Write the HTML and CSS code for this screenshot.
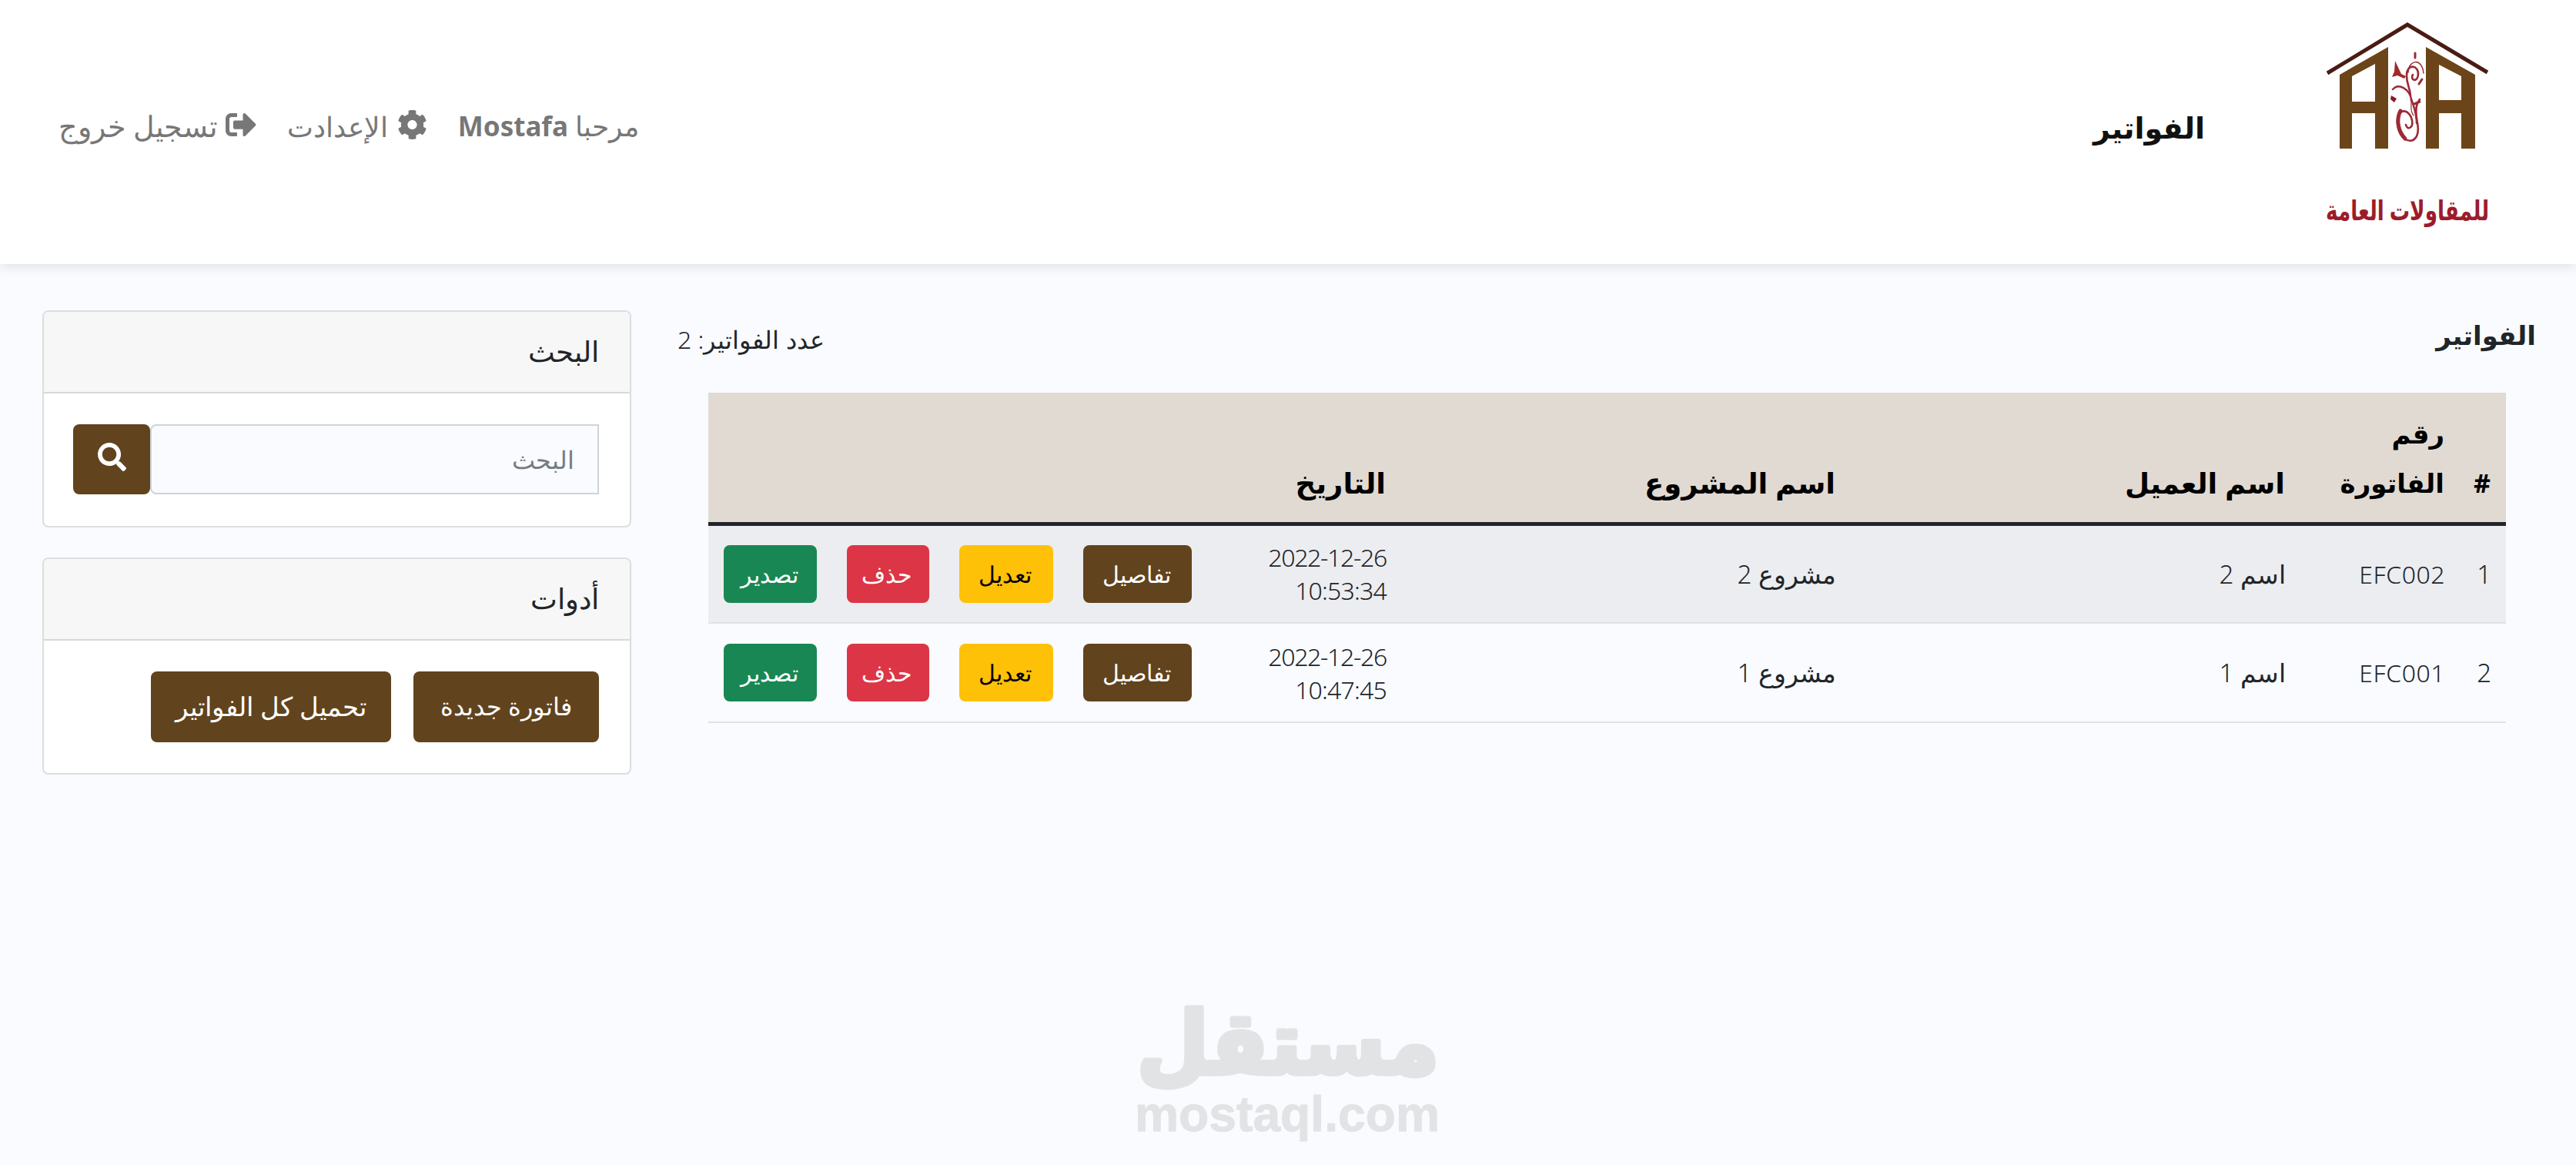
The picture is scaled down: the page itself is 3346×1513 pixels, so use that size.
FILE: index.html
```
<!DOCTYPE html>
<html lang="ar" dir="rtl">
<head>
    <meta charset="UTF-8">
    <meta name="viewport" content="width=device-width, initial-scale=1.0">
    <title>الفواتير</title>
    <link rel="stylesheet" href="styles.css">
</head>
<body>
    <header class="navbar">
        <svg class="logo" viewBox="0 0 220 290" direction="rtl">
            <path d="M5 75 L109 12 L213 74" fill="none" stroke="#4a1c14" stroke-width="5"/>
            <!-- house walls -->
            <path fill="#6b4519" fill-rule="evenodd" d="M21 77 L84 41 V173 H67 V127 H37 V173 H21Z M37 79 V112 H67 V63Z"/>
            <path fill="#6b4519" fill-rule="evenodd" d="M133 41 L197 77 V173 H179 V127 H150 V173 H133Z M150 64 V110 H179 V79Z"/>
            <!-- ornament -->
            <g fill="none" stroke="#9c2a35" stroke-linecap="round">
                <path d="M107 142 C109 150 117 146 115 136 C112 122 97 119 96 136 C95 158 113 171 121 157 C127 144 116 130 122 114 L125 109" stroke-width="2.6"/>
                <path d="M100 124 C94 135 97 151 106 160" stroke-width="5"/>
                <path d="M90 96 C98 87 111 96 114 108 C117 118 121 127 121 140" stroke-width="2.4"/>
                <path d="M113 104 C112 92 108 90 108 78 C108 62 124 64 123 77 C122 88 112 84 116 77" stroke-width="2.6"/>
                <path d="M110 74 C110 58 128 54 130 75" stroke-width="1.5"/>
                <path d="M113 108 C116 118 111 122 117 130" stroke-width="1.2"/>
                <path d="M128 83 L124 89 M119 49 V55 M118 115 L125 112" stroke-width="3"/>
            </g>
            <path fill="#a02a2a" d="M93 59 L101 76 L107 79 L105 82 L96 78 L89 80 L92 73Z"/>
            <path fill="#8a1a28" d="M88 104 L95 108 L92 113 L87 109Z"/>
            <text class="logo-text" x="215" y="266" textLength="212" lengthAdjust="spacingAndGlyphs">للمقاولات العامة</text>
        </svg>
        <h1 class="page-title">الفواتير</h1>
        <nav class="nav-links">
            <a><span>مرحبا <b>Mostafa</b></span></a>
            <a class="settings">
                <svg class="icon" width="39" height="40" viewBox="0 0 512 512"><path fill="currentColor" d="M487.4 315.7l-42.6-24.6c4.3-23.2 4.3-47 0-70.2l42.6-24.6c4.9-2.8 7.1-8.6 5.5-14-11.1-35.6-30-67.8-54.7-94.6-3.8-4.1-10-5.1-14.8-2.3L380.8 110c-17.9-15.4-38.5-27.3-60.8-35.1V25.8c0-5.6-3.9-10.5-9.4-11.7-36.7-8.2-74.3-7.8-109.2 0-5.5 1.2-9.4 6.1-9.4 11.7V75c-22.2 7.9-42.8 19.8-60.8 35.1L88.7 85.5c-4.900-2.800-11-1.900-14.800 2.300-24.700 26.700-43.600 58.900-54.700 94.600-1.700 5.400.6 11.200 5.500 14L67.300 221c-4.300 23.200-4.300 47 0 70.200l-42.600 24.600c-4.900 2.800-7.100 8.600-5.500 14 11.100 35.600 30 67.800 54.700 94.600 3.800 4.100 10 5.100 14.800 2.300l42.600-24.600c17.900 15.400 38.500 27.300 60.800 35.100v49.200c0 5.600 3.900 10.500 9.400 11.700 36.700 8.200 74.300 7.800 109.200 0 5.500-1.200 9.400-6.100 9.400-11.700v-49.200c22.200-7.900 42.800-19.800 60.800-35.100l42.600 24.600c4.900 2.800 11 1.900 14.800-2.300 24.700-26.700 43.600-58.900 54.700-94.600 1.500-5.500-.7-11.300-5.600-14.100zM256 336c-44.100 0-80-35.900-80-80s35.900-80 80-80 80 35.900 80 80-35.900 80-80 80z"/></svg>
                <span>الإعدادت</span>
            </a>
            <a class="logout">
                <svg class="icon" width="40" height="40" viewBox="0 0 512 512"><path fill="currentColor" d="M497 273L329 441c-15 15-41 4.500-41-17v-96H152c-13.300 0-24-10.700-24-24v-96c0-13.300 10.700-24 24-24h136V88c0-21.400 25.900-32 41-17l168 168c9.300 9.400 9.300 24.600 0 34zM192 436v-40c0-6.600-5.400-12-12-12H96c-17.700 0-32-14.300-32-32V160c0-17.700 14.300-32 32-32h84c6.600 0 12-5.400 12-12V76c0-6.600-5.400-12-12-12H96c-53 0-96 43-96 96v192c0 53 43 96 96 96h84c6.600 0 12-5.400 12-12z"/></svg>
                <span>تسجيل خروج</span>
            </a>
        </nav>
    </header>

    <div class="content">
        <main class="invoices">
            <div class="invoices-head">
                <h2>الفواتير</h2>
                <p>عدد الفواتير: 2</p>
            </div>
            <table class="table">
                <colgroup>
                    <col class="c-num"><col class="c-code"><col class="c-name"><col class="c-name"><col class="c-date">
                    <col class="c-details"><col class="c-edit"><col class="c-delete"><col class="c-export">
                </colgroup>
                <thead>
                    <tr>
                        <th class="num">#</th>
                        <th class="code">رقم<br>الفاتورة</th>
                        <th>اسم العميل</th>
                        <th>اسم المشروع</th>
                        <th>التاريخ</th>
                        <th></th>
                        <th></th>
                        <th></th>
                        <th></th>
                    </tr>
                </thead>
                <tbody>
                    <tr>
                        <td>1</td>
                        <td class="serial">EFC002</td>
                        <td>اسم 2</td>
                        <td>مشروع 2</td>
                        <td><span class="date">2022-12-26</span><br><span class="time">10:53:34</span></td>
                        <td><button class="btn btn-sm btn-main">تفاصيل</button></td>
                        <td><button class="btn btn-sm btn-warning">تعديل</button></td>
                        <td><button class="btn btn-sm btn-danger">حذف</button></td>
                        <td><button class="btn btn-sm btn-success">تصدير</button></td>
                    </tr>
                    <tr>
                        <td>2</td>
                        <td class="serial">EFC001</td>
                        <td>اسم 1</td>
                        <td>مشروع 1</td>
                        <td><span class="date">2022-12-26</span><br><span class="time">10:47:45</span></td>
                        <td><button class="btn btn-sm btn-main">تفاصيل</button></td>
                        <td><button class="btn btn-sm btn-warning">تعديل</button></td>
                        <td><button class="btn btn-sm btn-danger">حذف</button></td>
                        <td><button class="btn btn-sm btn-success">تصدير</button></td>
                    </tr>
                </tbody>
            </table>
        </main>

        <aside class="sidebar">
            <div class="card">
                <div class="card-header">البحث</div>
                <div class="card-body">
                    <form class="search">
                        <input type="text" placeholder="البحث">
                        <button type="button" class="btn btn-main btn-search">
                            <svg width="37" height="37" viewBox="0 0 512 512"><path fill="currentColor" d="M505 442.700L405.300 343c-4.500-4.500-10.600-7-17-7H372c27.600-35.300 44-79.700 44-128C416 93.100 322.900 0 208 0S0 93.100 0 208s93.100 208 208 208c48.300 0 92.700-16.400 128-44v16.300c0 6.400 2.500 12.500 7 17l99.700 99.700c9.400 9.400 24.600 9.400 33.900 0l28.300-28.300c9.400-9.400 9.400-24.600.1-34zM208 336c-70.700 0-128-57.200-128-128 0-70.700 57.200-128 128-128 70.700 0 128 57.200 128 128 0 70.700-57.200 128-128 128z"/></svg>
                        </button>
                    </form>
                </div>
            </div>
            <div class="card">
                <div class="card-header">أدوات</div>
                <div class="card-body tools">
                    <button class="btn btn-main btn-new">فاتورة جديدة</button>
                    <button class="btn btn-main btn-all">تحميل كل الفواتير</button>
                </div>
            </div>
        </aside>
    </div>

    <svg class="watermark" viewBox="0 0 400 190" direction="rtl">
        <text class="wm-ar" x="397" y="94" textLength="392" lengthAdjust="spacingAndGlyphs">مستقل</text>
        <text class="wm-en" x="2" y="169" direction="ltr" textLength="396" lengthAdjust="spacingAndGlyphs">mostaql.com</text>
    </svg>
</body>
</html>
```
FILE: styles.css
```
* {
    box-sizing: border-box;
}
body {
    margin: 0;
    height: 1513px;
    overflow: hidden;
    position: relative;
    background-color: #f9fbfe;
    color: #212529;
    font-family: "Noto Sans", "DejaVu Sans", sans-serif;
    font-size: 32px;
    font-weight: 300;
    line-height: 43px;
}
h1, h2, p {
    margin: 0;
}
.navbar {
    display: flex;
    align-items: center;
    height: 343px;
    padding: 0 108px 0 76px;
    background: white;
    box-shadow: 0 4px 14px rgba(0, 0, 0, 0.1);
}
.logo {
    width: 220px;
    height: 290px;
    margin-top: -13px;
    overflow: visible;
}
.logo-text {
    fill: #9c1c2c;
    font-size: 36px;
    font-weight: bold;
}
.page-title {
    margin-top: -14px;
    margin-right: 154px;
    font-size: 38px;
    font-weight: bold;
    line-height: 60px;
    color: #111;
}
.nav-links {
    display: flex;
    gap: 40px;
    margin-top: -16px;
    margin-right: auto;
    font-size: 35.5px;
    line-height: 50px;
    color: #777;
}
.nav-links a {
    display: flex;
    align-items: center;
    gap: 10px;
    white-space: nowrap;
}
.nav-links b {
    font-size: 35px;
    font-weight: bold;
}
.nav-links .settings {
    gap: 12px;
}
.nav-links .logout {
    font-size: 37.5px;
}
.nav-links .icon {
    margin-top: -4px;
}
.content {
    display: flex;
    justify-content: space-between;
    padding: 60px 52px 0 55px;
}
.invoices {
    width: 2414px;
}
.invoices-head {
    display: flex;
    justify-content: space-between;
    height: 107px;
}
.invoices-head h2 {
    font-size: 34px;
    line-height: 64px;
}
.invoices-head p {
    padding-top: 16px;
}
.table {
    width: 2335px;
    margin-right: 39px;
    table-layout: fixed;
    border-collapse: collapse;
}
.c-num { width: 60px; }
.c-code { width: 207px; }
.c-name { width: 584px; }
.c-date { width: 253px; }
.c-details { width: 180px; }
.c-edit { width: 161px; }
.c-delete { width: 146px; }
.c-export { width: 160px; }
.table th {
    height: 170px;
    padding: 20px 20px 19px;
    background: #e1dad3;
    border-bottom: 5px solid #212529;
    color: black;
    font-size: 37px;
    font-weight: bold;
    line-height: 64px;
    text-align: right;
    vertical-align: bottom;
    white-space: nowrap;
}
.table th.num {
    font-size: 34px;
}
.table th.code {
    font-size: 34px;
}
.table td {
    height: 129px;
    padding: 0 19px 0 20px;
    border-bottom: 2px solid #dee2e6;
    vertical-align: middle;
    white-space: nowrap;
    font-size: 33px;
}
.table tbody tr:first-child {
    background: #ecedf0;
}
.table .serial {
    font-size: 32px;
    letter-spacing: 0.5px;
}
.date {
    font-size: 32px;
    letter-spacing: -1.3px;
}
.time {
    font-size: 32px;
    letter-spacing: -0.8px;
}
.btn {
    display: flex;
    justify-content: center;
    align-items: center;
    height: 92px;
    padding: 0 0 3px;
    border: none;
    border-radius: 8px;
    color: white;
    font-family: inherit;
    font-size: 32px;
    font-weight: 300;
    white-space: nowrap;
    cursor: pointer;
}
.btn-sm {
    width: 100%;
    height: 75px;
    padding: 0 3px 0 0;
    font-size: 29.5px;
}
.btn-main {
    background: #61431d;
}
.btn-warning {
    background: #ffc107;
    color: black;
}
.btn-danger {
    background: #dc3545;
}
.btn-success {
    background: #198754;
}
.sidebar {
    width: 765px;
}
.card {
    height: 282px;
    margin-bottom: 39px;
    background: white;
    border: 2px solid #dcdddf;
    border-radius: 8px;
    overflow: hidden;
}
.card-header {
    height: 106px;
    padding: 0 40px;
    background: #f7f7f7;
    border-bottom: 2px solid #d8d8d9;
    font-size: 37px;
    line-height: 102px;
}
.card-body {
    padding: 40px 40px 0 38px;
}
.search {
    display: flex;
}
.search input {
    flex: 1;
    min-width: 0;
    height: 91px;
    padding: 0 30px;
    background: #f9fbfe;
    border: 2px solid #ced4da;
    border-radius: 8px 0 0 8px;
    font-family: inherit;
    font-size: 32px;
    font-weight: 300;
}
.search input::placeholder {
    color: #757c83;
}
.btn-search {
    width: 100px;
    height: 91px;
    padding-bottom: 6px;
}
.tools {
    display: flex;
    gap: 29px;
}
.btn-new {
    width: 241px;
}
.btn-all {
    width: 312px;
    font-size: 33.5px;
}
/* sits over the page, bottom centre */
.watermark {
    position: absolute;
    left: 1472px;
    top: 1300px;
    width: 400px;
    height: 190px;
    overflow: visible;
    fill: #e2e3e5;
    stroke: #e2e3e5;
    stroke-linejoin: round;
    font-weight: bold;
}
.wm-ar {
    font-size: 112px;
    stroke-width: 7px;
}
.wm-en {
    font-family: "Liberation Sans", sans-serif;
    font-size: 64px;
    stroke-width: 1px;
}
```
